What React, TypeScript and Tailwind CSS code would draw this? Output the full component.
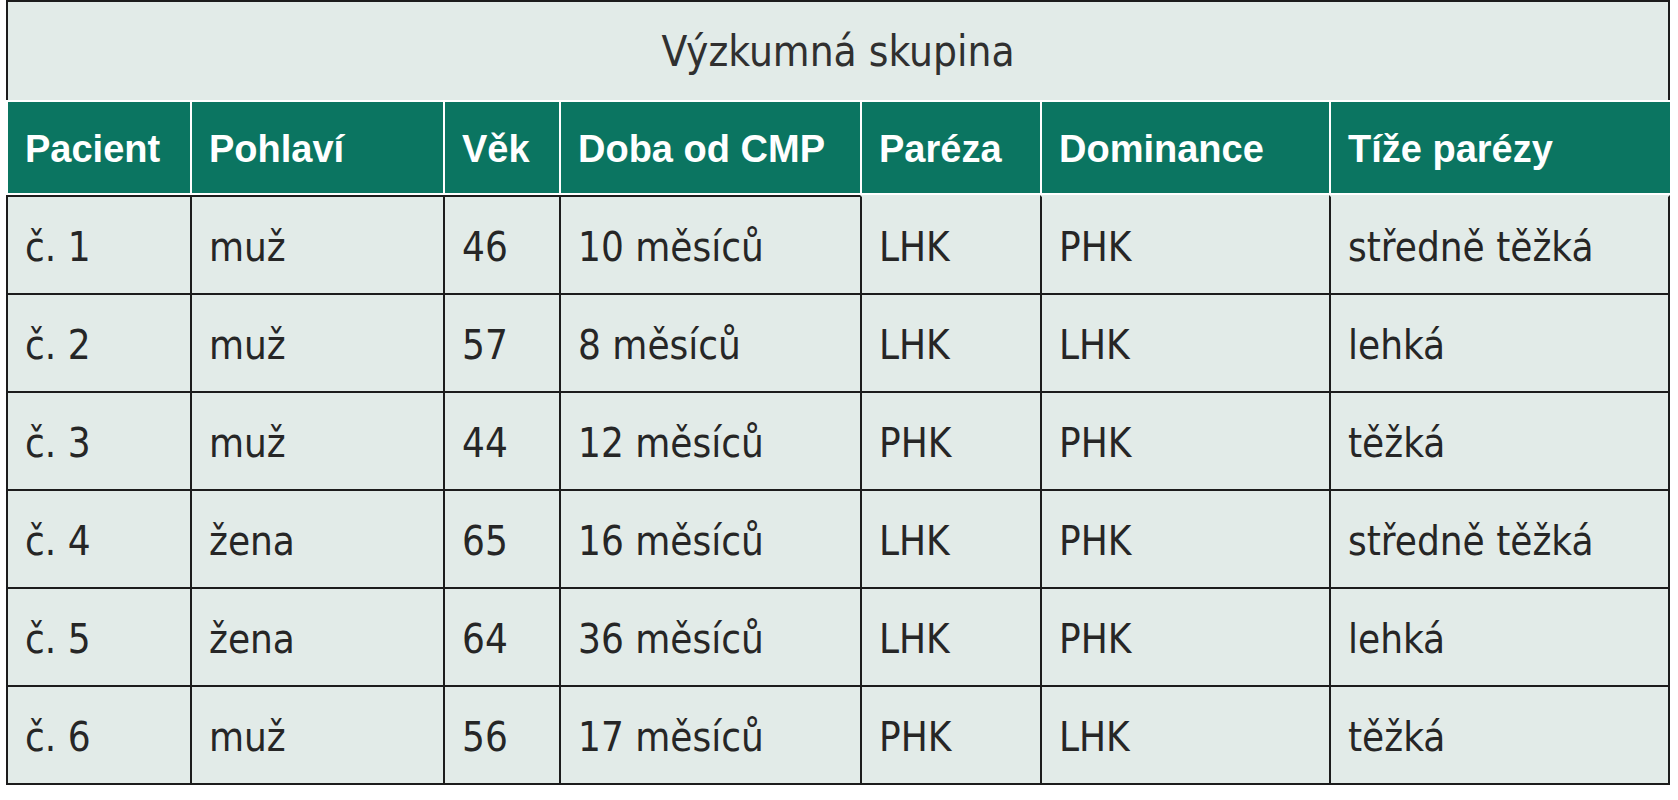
const columns = ['Pacient', 'Pohlaví', 'Věk', 'Doba od CMP', 'Paréza', 'Dominance', 'Tíže parézy'];

const rows = [
  ['č. 1', 'muž', '46', '10 měsíců', 'LHK', 'PHK', 'středně těžká'],
  ['č. 2', 'muž', '57', '8 měsíců', 'LHK', 'LHK', 'lehká'],
  ['č. 3', 'muž', '44', '12 měsíců', 'PHK', 'PHK', 'těžká'],
  ['č. 4', 'žena', '65', '16 měsíců', 'LHK', 'PHK', 'středně těžká'],
  ['č. 5', 'žena', '64', '36 měsíců', 'LHK', 'PHK', 'lehká'],
  ['č. 6', 'muž', '56', '17 měsíců', 'PHK', 'LHK', 'těžká'],
];

const grid = 'grid grid-cols-[184px_253px_116px_301px_180px_289px_341px]';

export default function App() {
  return (
    <div className="min-h-screen bg-white pl-[6px]">
      <div className="w-[1664px]">
        <div className="flex h-[100px] items-center justify-center border-x-2 border-t-2 border-[#1c1c1c] bg-[#e2ebe8] font-['DejaVu_Sans_Condensed','DejaVu_Sans',sans-serif] text-[42px] text-[#303030]">
          Výzkumná skupina
        </div>

        <div className={`${grid} bg-white py-[2px]`}>
          {columns.map((col) => (
            <div
              key={col}
              className="flex h-[91px] items-center border-l-2 border-white bg-[#0b7561] pl-[17px] pt-[3px] font-['Liberation_Sans',sans-serif] text-[38px] font-bold text-white"
            >
              {col}
            </div>
          ))}
        </div>

        <div className="font-['DejaVu_Sans_Condensed','DejaVu_Sans',sans-serif] text-[40px] text-[#262626]">
          {rows.map((row, r) => (
            <div key={r} className={grid}>
              {row.map((cell, c) => (
                <div
                  key={c}
                  className={`flex h-[98px] items-center border-l-2 border-t-2 border-l-[#1c1c1c] bg-[#e2ebe8] pl-[17px] pt-[4px] ${
                    r === 0 && c > 3 ? 'border-t-[#e2ebe8]' : 'border-t-[#1c1c1c]'
                  } ${c === row.length - 1 ? 'border-r-2 border-r-[#1c1c1c]' : ''} ${
                    r === rows.length - 1 ? 'h-[100px] border-b-2 border-b-[#1c1c1c]' : ''
                  }`}
                >
                  {cell}
                </div>
              ))}
            </div>
          ))}
        </div>
      </div>
    </div>
  );
}
